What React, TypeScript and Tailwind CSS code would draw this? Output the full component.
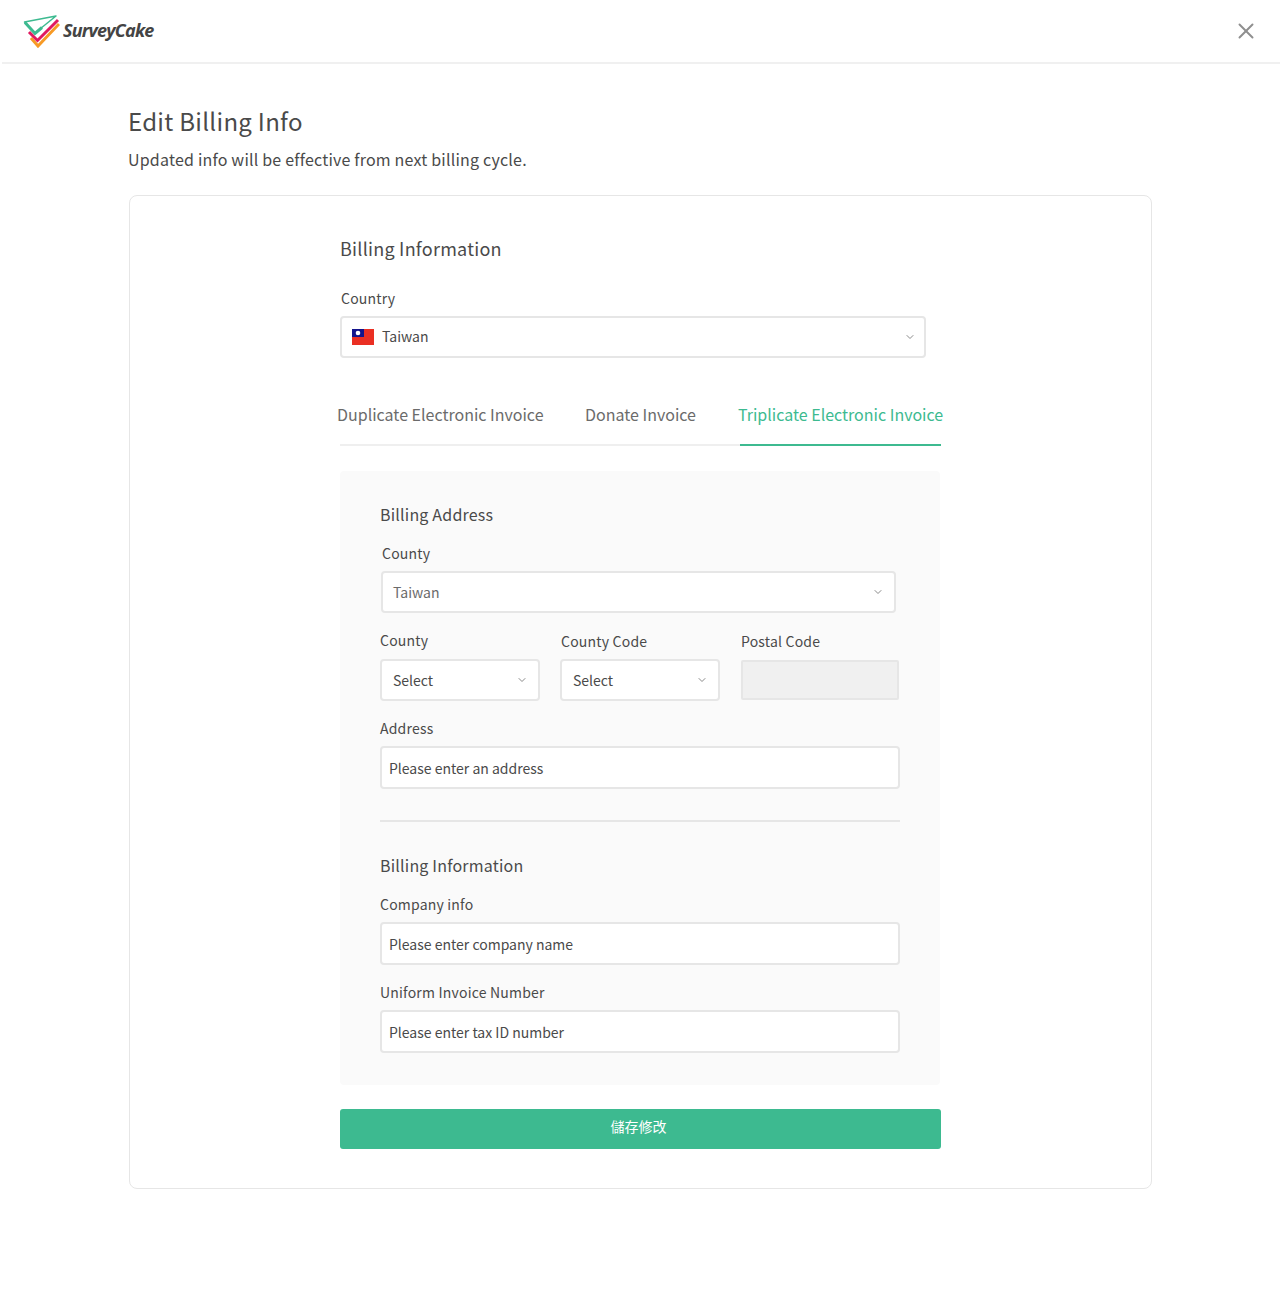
import { ChevronDown, X } from "lucide-react";

const font = { fontFamily: '"Noto Sans CJK TC", "Noto Sans", sans-serif' };

function Logo() {
  return (
    <svg width="37" height="34" viewBox="0 0 37 34" fill="none" className="shrink-0">
      <path d="M8 24 L15 32 L36 10" stroke="#f79a25" strokeWidth="3" />
      <path d="M6 18 L14.5 26.5 L35 6" stroke="#e0195f" strokeWidth="3" />
      <path d="M1.5 8 L33 2 L12 19 Z" stroke="#3dba90" strokeWidth="1.5" strokeLinejoin="round" />
      <path d="M2 8.5 L12 19.5 L19 13.5" stroke="#3dba90" strokeWidth="3" />
    </svg>
  );
}

function Field({ label, className, labelClass, children }: { label: string; className?: string; labelClass?: string; children: React.ReactNode }) {
  return (
    <div className={className}>
      <div className={`h-[26px] text-[14px] tracking-[0.2px] text-[#4a4a4a] ${labelClass ?? "leading-[26px]"}`}>{label}</div>
      {children}
    </div>
  );
}

function Select({ text, muted }: { text: string; muted?: boolean }) {
  return (
    <div className={`mt-[5px] flex h-[42px] items-center justify-between rounded-[4px] border-2 border-[#e6e6e6] bg-white pr-[10px] ${muted ? "pl-[10px]" : "pl-[11px]"}`}>
      <span className={`text-[14px] ${muted ? "text-[#6b6b6b]" : "text-[#4a4a4a]"}`}>{text}</span>
      <ChevronDown className="h-[12px] w-[12px] text-[#8a8a8a]" />
    </div>
  );
}

function Input({ placeholder }: { placeholder: string }) {
  return (
    <div className="mt-[5px] flex h-[43px] items-center rounded-[4px] border-2 border-[#e6e6e6] bg-white pl-[7px] pt-[2px] text-[14px] text-[#4a4a4a]">
      {placeholder}
    </div>
  );
}

export default function App() {
  return (
    <div style={font} className="min-h-[1305px] bg-white text-[#4a4a4a]">
      <header className="ml-[2px] flex h-[64px] items-center justify-between border-b-2 border-[#f0f0f0] pl-[21px] pr-[21px]">
        <div className="flex items-center gap-[3px]">
          <Logo />
          <span style={{ fontFamily: '"Open Sans", sans-serif' }} className="-mt-[2px] text-[18px] font-bold italic tracking-[-0.8px] text-[#444]">SurveyCake</span>
        </div>
        <X className="h-[26px] w-[26px] text-[#8f8f8f]" strokeWidth={1.8} />
      </header>

      <main className="mx-[128px] pt-[37px]">
        <h1 className="text-[24px] leading-[40px] tracking-[0.3px] text-[#4a4a4a]">Edit Billing Info</h1>
        <p className="mt-[4px] text-[16px] leading-[28px] tracking-[0.2px] text-[#4a4a4a]">Updated info will be effective from next billing cycle.</p>

        <section className="ml-px mt-[22px] h-[994px] rounded-[8px] border border-[#e6e6e6] pl-[210px] pr-[210px] pt-[37px]">
          <div className="w-[601px]">
            <h2 className="text-[18px] leading-[30px] tracking-[0.25px] text-[#4a4a4a]">Billing Information</h2>
            <div className="ml-px mt-[22px] h-[26px] text-[14px] leading-[26px] tracking-[0.2px]">Country</div>
            <div className="mt-[5px] flex h-[42px] w-[586px] items-center justify-between rounded-[4px] border-2 border-[#e6e6e6] bg-white pl-[10px] pr-[8px]">
              <div className="flex items-center gap-[8px]">
                <svg width="22" height="16" viewBox="0 0 22 16">
                  <rect width="22" height="16" fill="#ea2f23" />
                  <rect width="12" height="8" fill="#14148c" />
                  <circle cx="6" cy="4" r="2.3" fill="#fff" />
                </svg>
                <span className="pb-px text-[14px] text-[#4a4a4a]">Taiwan</span>
              </div>
              <ChevronDown className="h-[12px] w-[12px] text-[#8a8a8a]" />
            </div>

            <div className="mt-[39px] flex h-[49px] border-b-2 border-[#efefef]">
              <div className="-ml-[3px] w-[248px] shrink-0 text-[16px] leading-[34px] text-[#6b6b6b]">Duplicate Electronic Invoice</div>
              <div className="w-[153px] shrink-0 text-[16px] leading-[34px] text-[#6b6b6b]">Donate Invoice</div>
              <div className="relative min-w-0 flex-1 text-[16px] leading-[34px] text-[#3dba90]">
                <span className="whitespace-nowrap">Triplicate Electronic Invoice</span>
                <div className="absolute -bottom-[2px] left-[2px] right-0 h-[2px] bg-[#3dba90]" />
              </div>
            </div>

            <div className="mt-[25px] h-[614px] w-[600px] rounded-[4px] bg-[#fafafa] px-[40px] pt-[28px]">
              <h3 className="text-[16px] leading-[30px] tracking-[0.2px] text-[#4a4a4a]">Billing Address</h3>
              <Field label="County" labelClass="pl-px leading-[26px]" className="ml-px mr-[4px] mt-[11px]">
                <Select text="Taiwan" muted />
              </Field>

              <div className="mt-[15px] grid grid-cols-[160px_160px_159px] gap-x-[20px]">
                <Field label="County" labelClass="leading-[24px]">
                  <Select text="Select" />
                </Field>
                <Field label="County Code" labelClass="pl-px leading-[26px]">
                  <Select text="Select" />
                </Field>
                <Field label="Postal Code" className="ml-px">
                  <div className="mt-[6px] h-[40px] rounded-[2px] border-2 border-[#e6e6e6] bg-[#f0f0f0]" />
                </Field>
              </div>

              <Field label="Address" className="mt-[14px]">
                <Input placeholder="Please enter an address" />
              </Field>

              <div className="mt-[31px] h-[2px] bg-[#e6e6e6]" />

              <h3 className="mt-[28px] text-[16px] leading-[30px] tracking-[0.2px] text-[#4a4a4a]">Billing Information</h3>
              <Field label="Company info" className="mt-[11px]">
                <Input placeholder="Please enter company name" />
              </Field>
              <Field label="Uniform Invoice Number" className="mt-[14px]">
                <Input placeholder="Please enter tax ID number" />
              </Field>
            </div>

            <button className="mt-[24px] flex h-[40px] w-[601px] items-center justify-center rounded-[3px] bg-[#3dba90] pb-[6px] pr-[4px] text-[14px] text-white">儲存修改</button>
          </div>
        </section>
      </main>
    </div>
  );
}
